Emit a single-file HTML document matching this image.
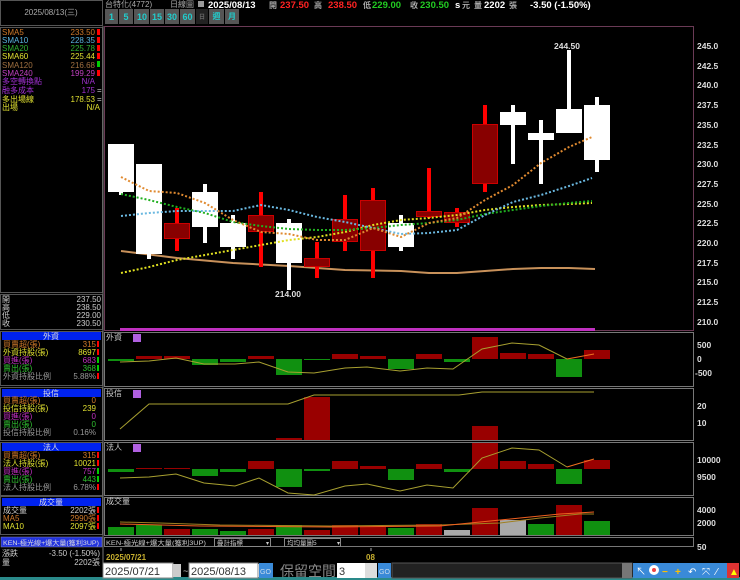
<!DOCTYPE html>
<html><head><meta charset="utf-8"><style>
html,body{margin:0;padding:0;background:#000;width:740px;height:580px;overflow:hidden}
svg{display:block}
text{font-family:"Liberation Sans","Noto Sans CJK TC",sans-serif}
.s{font-size:8px}
.b{font-weight:bold}
</style></head><body>
<svg width="740" height="580" viewBox="0 0 740 580" xmlns="http://www.w3.org/2000/svg">
<rect width="740" height="580" fill="#000"/>
<!-- left panel -->
<rect x="0.5" y="0.5" width="102" height="25" fill="none" stroke="#555"/>
<text x="51" y="15" class="s" fill="#aaa" text-anchor="middle">2025/08/13(三)</text>
<rect x="0.5" y="27.5" width="102" height="265" fill="none" stroke="#555"/>
<g class="s" font-size="8">
<text x="2" y="35" fill="#d07a2a">SMA5</text><text x="95" y="35" fill="#d07a2a" text-anchor="end">233.50</text>
<text x="2" y="43" fill="#5ab4e0">SMA10</text><text x="95" y="43" fill="#5ab4e0" text-anchor="end">228.35</text>
<text x="2" y="51" fill="#30b030">SMA20</text><text x="95" y="51" fill="#30b030" text-anchor="end">225.78</text>
<text x="2" y="59" fill="#e0e030">SMA60</text><text x="95" y="59" fill="#e0e030" text-anchor="end">225.44</text>
<text x="2" y="68" fill="#a07040">SMA120</text><text x="95" y="68" fill="#a07040" text-anchor="end">216.68</text>
<text x="2" y="76" fill="#c040c0">SMA240</text><text x="95" y="76" fill="#c040c0" text-anchor="end">199.29</text>
<text x="2" y="84" fill="#a030d0">多空轉換點</text><text x="95" y="84" fill="#a030d0" text-anchor="end">N/A</text>
<text x="2" y="93" fill="#a030d0">融多成本</text><text x="95" y="93" fill="#a030d0" text-anchor="end">175</text>
<text x="2" y="102" fill="#e0e030">多出場線</text><text x="95" y="102" fill="#e0e030" text-anchor="end">178.53</text>
<text x="2" y="110" fill="#e0e030">出場</text><text x="100" y="110" fill="#e0e030" text-anchor="end">N/A</text>
</g>
<g fill="#f00"><rect x="97" y="29" width="3" height="6"/><rect x="97" y="37" width="3" height="6"/><rect x="97" y="45" width="3" height="6"/><rect x="97" y="53" width="3" height="6"/><rect x="97" y="70" width="3" height="6"/></g>
<rect x="97" y="61" width="3" height="6" fill="#0c0"/>
<text x="97" y="93" class="s" fill="#ccc">=</text><text x="97" y="102" class="s" fill="#ccc">=</text>

<rect x="0.5" y="294.5" width="102" height="35" fill="none" stroke="#555"/>
<g class="s" fill="#ccc">
<text x="2" y="302">開</text><text x="101" y="302" text-anchor="end">237.50</text>
<text x="2" y="310">高</text><text x="101" y="310" text-anchor="end">238.50</text>
<text x="2" y="318">低</text><text x="101" y="318" text-anchor="end">229.00</text>
<text x="2" y="326">收</text><text x="101" y="326" text-anchor="end">230.50</text>
</g>
<!-- 外資 block -->
<rect x="0.5" y="331.5" width="102" height="54" fill="none" stroke="#555"/>
<rect x="2" y="332" width="99" height="8" fill="#0022ee"/>
<text x="51" y="339" class="s" fill="#ddd" text-anchor="middle">外資</text>
<g class="s">
<text x="3" y="347" fill="#d07a2a">買賣超(張)</text><text x="96" y="347" fill="#d07a2a" text-anchor="end">315</text>
<text x="3" y="355" fill="#e0e030">外資持股(張)</text><text x="96" y="355" fill="#e0e030" text-anchor="end">8697</text>
<text x="3" y="363" fill="#c030c0">買進(張)</text><text x="96" y="363" fill="#c030c0" text-anchor="end">683</text>
<text x="3" y="371" fill="#30c030">賣出(張)</text><text x="96" y="371" fill="#30c030" text-anchor="end">368</text>
<text x="3" y="379" fill="#999">外資持股比例</text><text x="96" y="379" fill="#999" text-anchor="end">5.88%</text>
</g>
<!-- 投信 -->
<rect x="0.5" y="387.5" width="102" height="53" fill="none" stroke="#555"/>
<rect x="2" y="389" width="99" height="8" fill="#0022ee"/>
<text x="51" y="396" class="s" fill="#ddd" text-anchor="middle">投信</text>
<g class="s">
<text x="3" y="403" fill="#d07a2a">買賣超(張)</text><text x="96" y="403" fill="#d07a2a" text-anchor="end">0</text>
<text x="3" y="411" fill="#e0e030">投信持股(張)</text><text x="96" y="411" fill="#e0e030" text-anchor="end">239</text>
<text x="3" y="419" fill="#c030c0">買進(張)</text><text x="96" y="419" fill="#c030c0" text-anchor="end">0</text>
<text x="3" y="427" fill="#30c030">賣出(張)</text><text x="96" y="427" fill="#30c030" text-anchor="end">0</text>
<text x="3" y="435" fill="#999">投信持股比例</text><text x="96" y="435" fill="#999" text-anchor="end">0.16%</text>
</g>
<!-- 法人 -->
<rect x="0.5" y="442.5" width="102" height="53" fill="none" stroke="#555"/>
<rect x="2" y="443" width="99" height="8" fill="#0022ee"/>
<text x="51" y="450" class="s" fill="#ddd" text-anchor="middle">法人</text>
<g class="s">
<text x="3" y="458" fill="#d07a2a">買賣超(張)</text><text x="96" y="458" fill="#d07a2a" text-anchor="end">315</text>
<text x="3" y="466" fill="#e0e030">法人持股(張)</text><text x="96" y="466" fill="#e0e030" text-anchor="end">10021</text>
<text x="3" y="474" fill="#c030c0">買進(張)</text><text x="96" y="474" fill="#c030c0" text-anchor="end">757</text>
<text x="3" y="482" fill="#30c030">賣出(張)</text><text x="96" y="482" fill="#30c030" text-anchor="end">443</text>
<text x="3" y="490" fill="#999">法人持股比例</text><text x="96" y="490" fill="#999" text-anchor="end">6.78%</text>
</g>
<!-- 成交量 -->
<rect x="0.5" y="496.5" width="102" height="38" fill="none" stroke="#555"/>
<rect x="2" y="498" width="99" height="8" fill="#0022ee"/>
<text x="51" y="505" class="s" fill="#ddd" text-anchor="middle">成交量</text>
<g class="s">
<text x="3" y="513" fill="#ccc">成交量</text><text x="96" y="513" fill="#ccc" text-anchor="end">2202張</text>
<text x="3" y="521" fill="#d07a2a">MA5</text><text x="96" y="521" fill="#d07a2a" text-anchor="end">2990張</text>
<text x="3" y="529" fill="#e0e030">MA10</text><text x="96" y="529" fill="#e0e030" text-anchor="end">2097張</text>
</g>
<rect x="1" y="537" width="101" height="10" fill="#2233dd" stroke="#88a" stroke-width="0.5"/>
<text x="3" y="545" fill="#ddd" font-size="6.5" textLength="96" lengthAdjust="spacingAndGlyphs">KEN-極光線+爆大量(獲利3UP)</text>
<g class="s" fill="#ccc">
<text x="2" y="556">漲跌</text><text x="100" y="556" text-anchor="end">-3.50 (-1.50%)</text>
<text x="2" y="565">量</text><text x="100" y="565" text-anchor="end">2202張</text>
</g>
<g fill="#f00"><rect x="97" y="341" width="2" height="6"/><rect x="97" y="349" width="2" height="6"/><rect x="97" y="373" width="2" height="6"/><rect x="97" y="452" width="2" height="6"/><rect x="97" y="460" width="2" height="6"/><rect x="97" y="484" width="2" height="6"/><rect x="97" y="507" width="2" height="6"/><rect x="97" y="515" width="2" height="6"/><rect x="97" y="523" width="2" height="6"/></g>
<g fill="#0c0"><rect x="97" y="357" width="2" height="6"/><rect x="97" y="365" width="2" height="6"/><rect x="97" y="468" width="2" height="6"/><rect x="97" y="476" width="2" height="6"/></g>

<!-- header -->
<text x="105" y="7" class="s" fill="#aaa">台特化(4772)</text>
<text x="170" y="7" class="s" fill="#aaa">日線圖</text>
<rect x="198" y="1" width="6" height="6" fill="#999"/>
<g font-size="9.5" class="b">
<text x="208" y="8" fill="#fff">2025/08/13</text>
<text x="269" y="8" class="s" fill="#aaa">開</text><text x="280" y="8" fill="#f22">237.50</text>
<text x="314" y="8" class="s" fill="#aaa">高</text><text x="328" y="8" fill="#f22">238.50</text>
<text x="363" y="8" class="s" fill="#aaa">低</text><text x="372" y="8" fill="#2c2">229.00</text>
<text x="410" y="8" class="s" fill="#aaa">收</text><text x="420" y="8" fill="#2c2">230.50</text>
<text x="455" y="8" fill="#fff">s</text><text x="462" y="8" class="s" fill="#aaa">元</text>
<text x="474" y="8" class="s" fill="#aaa">量</text><text x="484" y="8" fill="#fff">2202</text>
<text x="509" y="8" class="s" fill="#aaa">張</text>
<text x="530" y="8" fill="#fff">-3.50 (-1.50%)</text>
</g>
<!-- period buttons -->
<g font-size="9" class="b" text-anchor="middle">
<rect x="105" y="9" width="13" height="15" fill="#555"/><text x="111.5" y="20" fill="#2cc">1</text>
<rect x="119" y="9" width="14" height="15" fill="#555"/><text x="126" y="20" fill="#2cc">5</text>
<rect x="134" y="9" width="15" height="15" fill="#555"/><text x="142" y="20" fill="#2cc">10</text>
<rect x="150" y="9" width="14" height="15" fill="#555"/><text x="157" y="20" fill="#2cc">15</text>
<rect x="165" y="9" width="14" height="15" fill="#555"/><text x="172" y="20" fill="#2cc">30</text>
<rect x="180" y="9" width="15" height="15" fill="#555"/><text x="187.5" y="20" fill="#2cc">60</text>
<rect x="196" y="9" width="12" height="15" fill="#222"/><text x="202" y="19" font-size="6" fill="#666">日</text>
<rect x="209" y="9" width="15" height="15" fill="#555"/><text x="216.5" y="19" font-size="8" fill="#2cc">週</text>
<rect x="225" y="9" width="14" height="15" fill="#555"/><text x="232" y="19" font-size="8" fill="#2cc">月</text>
</g>

<!-- main chart box -->
<rect x="104.5" y="26.5" width="589" height="304" fill="none" stroke="#6a3a55"/>
<line x1="103" y1="26" x2="103" y2="580" stroke="#777"/>
<rect x="120" y="328" width="475" height="3" fill="#c030c0"/>
<g font-size="8.5" class="b" fill="#ddd">
<text x="697" y="49">245.0</text><text x="697" y="69">242.5</text><text x="697" y="88">240.0</text><text x="697" y="108">237.5</text>
<text x="697" y="128">235.0</text><text x="697" y="148">232.5</text><text x="697" y="167">230.0</text><text x="697" y="187">227.5</text>
<text x="697" y="207">225.0</text><text x="697" y="226">222.5</text><text x="697" y="246">220.0</text><text x="697" y="266">217.5</text>
<text x="697" y="285">215.0</text><text x="697" y="305">212.5</text><text x="697" y="325">210.0</text>
</g>

<polyline fill="none" stroke="#c8915a" stroke-width="2" points="121,251 177,258 233,263 289,266 345,270 401,271 429,273 457,273 485,271 513,269 541,268 569,268 595,269"/>
<g>
<rect x="119" y="144" width="4" height="51" fill="#fff"/><rect x="108" y="144" width="26" height="48" fill="#fff"/>
<rect x="147" y="164" width="4" height="95" fill="#fff"/><rect x="136" y="164" width="26" height="90" fill="#fff"/>
<rect x="175" y="208" width="4" height="43" fill="#f00"/><rect x="164.5" y="223.5" width="25" height="15" fill="#880000" stroke="#c00"/>
<rect x="203" y="184" width="4" height="59" fill="#fff"/><rect x="192" y="192" width="26" height="35" fill="#fff"/>
<rect x="231" y="215" width="4" height="44" fill="#fff"/><rect x="220" y="223" width="26" height="24" fill="#fff"/>
<rect x="259" y="192" width="4" height="75" fill="#f00"/><rect x="248.5" y="215.5" width="25" height="16" fill="#880000" stroke="#c00"/>
<rect x="287" y="219" width="4" height="71" fill="#fff"/><rect x="276" y="223" width="26" height="40" fill="#fff"/>
<rect x="315" y="242" width="4" height="36" fill="#f00"/><rect x="304.5" y="258.5" width="25" height="8" fill="#880000" stroke="#c00"/>
<rect x="343" y="195" width="4" height="56" fill="#f00"/><rect x="332.5" y="219.5" width="25" height="22" fill="#880000" stroke="#c00"/>
<rect x="371" y="188" width="4" height="90" fill="#f00"/><rect x="360.5" y="200.5" width="25" height="50" fill="#880000" stroke="#c00"/>
<rect x="399" y="215" width="4" height="36" fill="#fff"/><rect x="388" y="223" width="26" height="24" fill="#fff"/>
<rect x="427" y="168" width="4" height="50" fill="#f00"/><rect x="416.5" y="211.5" width="25" height="5" fill="#880000" stroke="#c00"/>
<rect x="455" y="208" width="4" height="19" fill="#f00"/><rect x="444.5" y="212.5" width="25" height="10" fill="#880000" stroke="#c00"/>
<rect x="483" y="105" width="4" height="87" fill="#f00"/><rect x="472.5" y="124.5" width="25" height="59" fill="#880000" stroke="#c00"/>
<rect x="511" y="105" width="4" height="59" fill="#fff"/><rect x="500" y="112" width="26" height="13" fill="#fff"/>
<rect x="539" y="120" width="4" height="64" fill="#fff"/><rect x="528" y="133" width="26" height="7" fill="#fff"/>
<rect x="567" y="50" width="4" height="83" fill="#fff"/><rect x="556" y="109" width="26" height="24" fill="#fff"/>
<rect x="595" y="97" width="4" height="75" fill="#fff"/><rect x="584" y="105" width="26" height="55" fill="#fff"/>
</g>
<text x="288" y="297" font-size="8.5" class="b" fill="#ddd" text-anchor="middle">214.00</text>
<text x="567" y="49" font-size="8.5" class="b" fill="#ddd" text-anchor="middle">244.50</text>
<g fill="none" stroke-width="2" stroke-dasharray="2,2">
<polyline stroke="#e0e020" points="121,273 149,267 177,260 205,255 233,250 261,245 289,240 317,237 345,232 373,225 401,220 429,218 457,215 485,210 513,207 541,205 569,204 592,203"/>
<polyline stroke="#20b020" points="121,194 149,200 177,207 205,213 233,222 261,226 289,229 317,230 345,230 373,228 401,225 429,223 457,220 485,214 513,210 541,206 569,203 592,201"/>
<polyline stroke="#6ab8e0" points="121,216 149,213 177,211 205,211 233,211 261,205 289,210 317,217 345,222 373,228 401,234 429,233 457,230 485,215 513,202 541,195 569,186 592,178"/>
<polyline stroke="#e08a30" points="121,177 149,191 177,193 205,203 233,220 261,232 289,234 317,240 345,240 373,228 401,237 429,223 457,218 485,200 513,185 541,163 569,147 592,137"/>
</g>

<g fill="none" stroke="#777">
<rect x="104.5" y="332.5" width="589" height="54"/>
<rect x="104.5" y="388.5" width="589" height="52"/>
<rect x="104.5" y="442.5" width="589" height="53"/>
<rect x="104.5" y="497.5" width="589" height="38"/>
</g>
<g class="s" fill="#ccc" font-size="7">
<text x="106" y="340">外資</text><text x="106" y="396">投信</text><text x="106" y="450">法人</text><text x="106" y="504">成交量</text>
</g>
<g fill="#b060e0"><rect x="133" y="334" width="8" height="8"/><rect x="133" y="390" width="8" height="8"/><rect x="133" y="444" width="8" height="8"/></g>
<g font-size="8.5" class="b" fill="#ddd">
<text x="697" y="348">500</text><text x="697" y="362">0</text><text x="695" y="376">-500</text>
<text x="697" y="409">20</text><text x="697" y="426">10</text>
<text x="697" y="463">10000</text><text x="697" y="480">9500</text>
<text x="697" y="513">4000</text><text x="697" y="526">2000</text><text x="697" y="550">50</text>
</g>
<g>
<rect x="108" y="359" width="26" height="2" fill="#109010"/>
<rect x="136" y="356" width="26" height="3" fill="#900"/>
<rect x="164" y="356" width="26" height="3" fill="#900"/>
<rect x="192" y="359" width="26" height="6" fill="#109010"/>
<rect x="220" y="359" width="26" height="3" fill="#109010"/>
<rect x="248" y="356" width="26" height="3" fill="#900"/>
<rect x="276" y="359" width="26" height="16" fill="#109010"/>
<rect x="304" y="359" width="26" height="1" fill="#109010"/>
<rect x="332" y="354" width="26" height="5" fill="#900"/>
<rect x="360" y="356" width="26" height="3" fill="#900"/>
<rect x="388" y="359" width="26" height="10" fill="#109010"/>
<rect x="416" y="354" width="26" height="5" fill="#900"/>
<rect x="444" y="359" width="26" height="3" fill="#109010"/>
<rect x="472" y="337" width="26" height="22" fill="#900"/>
<rect x="500" y="353" width="26" height="6" fill="#900"/>
<rect x="528" y="354" width="26" height="5" fill="#900"/>
<rect x="556" y="359" width="26" height="18" fill="#109010"/>
<rect x="584" y="350" width="26" height="9" fill="#900"/>
</g>
<polyline fill="none" stroke="#a8a030" points="120,362 149,361 176,358 204,364 235,364 259,362 288,372 314,373 345,368 367,367 400,371 427,368 453,369 482,349 512,343 539,345 567,359"/>
<polyline fill="none" stroke="#f07020" points="567,359 594,354"/>
<rect x="276" y="438" width="26" height="2" fill="#900"/>
<rect x="304" y="397" width="26" height="43" fill="#900"/>
<rect x="472" y="426" width="26" height="14" fill="#900"/>
<polyline fill="none" stroke="#a8a030" points="120,429 149,404 288,404 314,395 459,395 482,392 594,392"/>
<g>
<rect x="108" y="469" width="26" height="3" fill="#109010"/>
<rect x="136" y="468" width="26" height="1" fill="#900"/>
<rect x="164" y="468" width="26" height="1" fill="#900"/>
<rect x="192" y="469" width="26" height="7" fill="#109010"/>
<rect x="220" y="469" width="26" height="3" fill="#109010"/>
<rect x="248" y="461" width="26" height="8" fill="#900"/>
<rect x="276" y="469" width="26" height="18" fill="#109010"/>
<rect x="304" y="469" width="26" height="2" fill="#109010"/>
<rect x="332" y="461" width="26" height="8" fill="#900"/>
<rect x="360" y="466" width="26" height="3" fill="#900"/>
<rect x="388" y="469" width="26" height="11" fill="#109010"/>
<rect x="416" y="464" width="26" height="5" fill="#900"/>
<rect x="444" y="469" width="26" height="3" fill="#109010"/>
<rect x="472" y="443" width="26" height="26" fill="#900"/>
<rect x="500" y="461" width="26" height="8" fill="#900"/>
<rect x="528" y="464" width="26" height="5" fill="#900"/>
<rect x="556" y="469" width="26" height="15" fill="#109010"/>
<rect x="584" y="460" width="26" height="9" fill="#900"/>
</g>
<polyline fill="none" stroke="#a8a030" points="120,478 149,477 176,474 204,483 235,486 259,478 288,493 314,495 345,486 367,484 400,491 427,485 453,488 482,458 512,448 539,450 567,467"/>
<polyline fill="none" stroke="#f07020" points="567,467 594,459"/>
<g>
<rect x="108" y="527" width="26" height="8" fill="#109010"/>
<rect x="136" y="525" width="26" height="10" fill="#109010"/>
<rect x="164" y="529" width="26" height="6" fill="#900"/>
<rect x="192" y="529" width="26" height="6" fill="#109010"/>
<rect x="220" y="531" width="26" height="4" fill="#109010"/>
<rect x="248" y="529" width="26" height="6" fill="#900"/>
<rect x="276" y="525" width="26" height="10" fill="#109010"/>
<rect x="304" y="530" width="26" height="5" fill="#900"/>
<rect x="332" y="525" width="26" height="10" fill="#900"/>
<rect x="360" y="527" width="26" height="8" fill="#900"/>
<rect x="388" y="528" width="26" height="7" fill="#109010"/>
<rect x="416" y="524" width="26" height="11" fill="#900"/>
<rect x="444" y="530" width="26" height="5" fill="#aaa"/>
<rect x="472" y="508" width="26" height="27" fill="#900"/>
<rect x="500" y="520" width="26" height="15" fill="#aaa"/>
<rect x="528" y="524" width="26" height="11" fill="#109010"/>
<rect x="556" y="505" width="26" height="30" fill="#900"/>
<rect x="584" y="521" width="26" height="14" fill="#109010"/>
</g>
<polyline fill="none" stroke="#a08020" points="120,522 160,523 220,525 330,526 440,525 500,523 540,518 580,514 594,514"/>
<polyline fill="none" stroke="#f06020" points="120,524 200,526 330,527 440,526 480,522 520,518 560,514 594,512"/>

<rect x="104.5" y="537.5" width="589" height="9" fill="none" stroke="#777"/>
<text x="106" y="545" font-size="6.5" fill="#ccc" textLength="100" lengthAdjust="spacingAndGlyphs">KEN-極光線+爆大量(獲利3UP)</text>
<rect x="214.5" y="538.5" width="56" height="8" fill="none" stroke="#888"/>
<text x="217" y="545" font-size="6.5" fill="#ccc">疊計指標</text><text x="266" y="545" font-size="6" fill="#ccc">▾</text>
<rect x="284.5" y="538.5" width="56" height="8" fill="none" stroke="#888"/>
<text x="287" y="545" font-size="6.5" fill="#ccc">均均量圖5</text><text x="337" y="545" font-size="6" fill="#ccc">▾</text>
<line x1="121" y1="548" x2="121" y2="551" stroke="#aaa"/><line x1="371" y1="548" x2="371" y2="551" stroke="#aaa"/>
<text x="106" y="560" font-size="8" class="b" fill="#c8b030">2025/07/21</text>
<text x="366" y="560" font-size="8" class="b" fill="#c8b030">08</text>
<rect x="0" y="577" width="740" height="3" fill="#2a8a8a"/>
<rect x="103" y="563" width="70" height="15" fill="#fff" stroke="#888"/>
<text x="105" y="575" font-size="11" fill="#333" font-family="Liberation Serif">2025/07/21</text>
<rect x="173" y="564" width="8" height="13" fill="#ccc"/>
<text x="183" y="574" font-size="9" fill="#ccc">~</text>
<rect x="189" y="563" width="69" height="15" fill="#fff" stroke="#888"/>
<text x="191" y="575" font-size="11" fill="#333">2025/08/13</text>
<rect x="258" y="564" width="7" height="13" fill="#ccc"/>
<rect x="259" y="563" width="14" height="15" fill="#3a8ad8"/><text x="260" y="574" font-size="7" fill="#cde">GO</text>
<text x="280" y="576" font-size="14" fill="#888">保留空間</text>
<rect x="337" y="563" width="28" height="15" fill="#fff"/>
<text x="339" y="575" font-size="11" fill="#333">3</text>
<rect x="365" y="563" width="12" height="15" fill="#ddd"/>
<rect x="378" y="563" width="13" height="15" fill="#3a8ad8"/><text x="379" y="574" font-size="7" fill="#cde">GO</text>
<rect x="392" y="563" width="240" height="15" fill="#222" stroke="#555"/>
<rect x="622" y="563" width="10" height="15" fill="#777"/>
<rect x="633" y="563" width="106" height="15" fill="#3a8ad8"/>
<g font-size="10" fill="#fff">
<text x="636" y="575">↖</text><circle cx="654" cy="570" r="5" fill="#fff"/><circle cx="654" cy="570" r="2" fill="#e44"/>
<text x="662" y="575" fill="#ffc000" font-weight="bold">−</text><text x="675" y="575" fill="#ffc000" font-weight="bold">+</text>
<text x="688" y="575">↶</text><text x="702" y="575">⤧</text><text x="716" y="575">⁄</text>
<rect x="727" y="563" width="12" height="15" fill="#d33"/><text x="729" y="575" fill="#ff0">▲</text>
</g>
</svg>
</body></html>
